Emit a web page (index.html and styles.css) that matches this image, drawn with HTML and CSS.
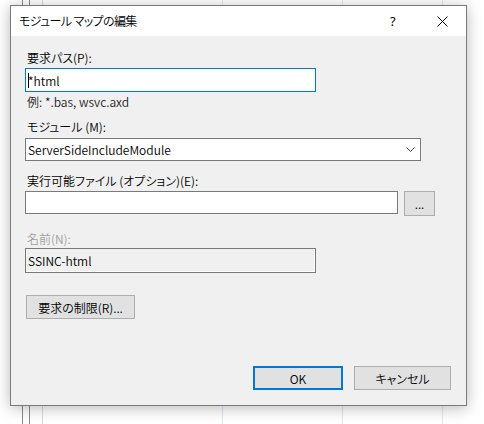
FILE: index.html
```html
<!DOCTYPE html>
<html lang="ja">
<head>
<meta charset="utf-8">
<title>モジュール マップの編集</title>
<link rel="stylesheet" href="styles.css">
</head>
<body>
<div class="dialog">
  <div class="titlebar">
    <span class="title">モジュール マップの編集</span>
    <span class="help">?</span>
    <span class="close"><svg width="11" height="11" viewBox="0 0 11 11"><path d="M0.5 0.5L10.5 10.5M10.5 0.5L0.5 10.5" stroke="#000" stroke-width="1" fill="none"/></svg></span>
  </div>
  <div class="content">
    <div class="label l1">要求パス(P):</div>
    <div class="field f-path"><span class="caret"></span>*html</div>
    <div class="hint">例: *.bas, wsvc.axd</div>
    <div class="label l2">モジュール (M):</div>
    <div class="field f-select">ServerSideIncludeModule<svg class="chev" width="9" height="5" viewBox="0 0 9 5"><path d="M0.5 0.5L4.5 4.5L8.5 0.5" stroke="#444" stroke-width="1" fill="none"/></svg></div>
    <div class="label l3">実行可能ファイル (オプション)(E):</div>
    <div class="row">
      <div class="field f-exe"></div>
      <div class="btn btn-browse">...</div>
    </div>
    <div class="label disabled l4">名前(N):</div>
    <div class="field f-name">SSINC-html</div>
    <div class="btn btn-limit">要求の制限(R)...</div>
    <div class="footer">
      <div class="btn btn-ok">OK</div>
      <div class="btn btn-cancel">キャンセル</div>
    </div>
  </div>
</div>
</body>
</html>
```
FILE: styles.css
```css
html, body {
  margin: 0;
  padding: 0;
}
body {
  width: 484px;
  height: 424px;
  overflow: hidden;
  font-family: "Noto Sans CJK JP", "Noto Sans", sans-serif;
  font-feature-settings: "palt";
  font-size: 12px;
  font-weight: 350;
  color: #000;
  background-color: #fff;
  background-image:
    linear-gradient(#8a8a8a, #8a8a8a),
    linear-gradient(#8a8a8a, #8a8a8a),
    linear-gradient(#d8d8d8, #d8d8d8),
    linear-gradient(#dfe8f2, #dfe8f2),
    linear-gradient(#dfe8f2, #dfe8f2),
    linear-gradient(#dfe8f2, #dfe8f2);
  background-size: 1px 100%;
  background-repeat: no-repeat;
  background-position: 22px 0, 29px 0, 42px 0, 222px 0, 342px 0, 442px 0;
}
.dialog {
  margin: 5px 0 0 10px;
  width: 455px;
  height: 399px;
  border: 1px solid #7a7a7a;
  background: #f0f0f0;
  box-shadow: 0 2px 14px rgba(0, 0, 0, 0.28);
  display: flex;
  flex-direction: column;
}
.titlebar {
  height: 30px;
  background: #fff;
  display: flex;
  align-items: center;
  flex: none;
}
.title {
  margin-left: 8px;
  flex: 1;
  line-height: 16px;
  letter-spacing: -0.6px;
}
.help {
  width: 10px;
  margin-right: 37px;
  font-family: "Noto Sans", sans-serif;
  font-size: 13px;
  font-weight: 400;
}
.close {
  width: 11px;
  height: 11px;
  margin-right: 18px;
  display: flex;
}
.content {
  flex: 1;
  padding: 0 15px 15px 14px;
  display: flex;
  flex-direction: column;
  align-items: flex-start;
}
.label, .hint {
  line-height: 16px;
  padding-left: 2px;
  white-space: nowrap;
}
.l1 { margin-top: 14px; }
.hint { margin-top: 2px; color: #222; }
.l2 { margin-top: 9px; }
.l3 { margin-top: 12px; }
.l4 { margin-top: 15px; }
.disabled { color: #a0a0a0; }
.field {
  box-sizing: border-box;
  border: 1px solid #7a7a7a;
  background: #fff;
  display: flex;
  align-items: center;
  padding-left: 2px;
  white-space: nowrap;
}
.f-path {
  margin-top: 2px;
  width: 291px;
  height: 24px;
  border-color: #0078d7;
}
.caret {
  width: 1px;
  height: 15px;
  background: #000;
  margin-right: -1px;
}
.f-select {
  margin-top: 3px;
  width: 396px;
  height: 23px;
  position: relative;
}
.chev {
  position: absolute;
  right: 5px;
  top: 8px;
}
.row {
  margin-top: 2px;
  display: flex;
  align-items: flex-start;
  gap: 6px;
}
.f-exe {
  width: 373px;
  height: 23px;
}
.f-name {
  margin-top: 1px;
  width: 291px;
  height: 25px;
  background: #f0f0f0;
  box-shadow: inset -1px -1px 0 #fff;
}
.btn {
  box-sizing: border-box;
  height: 24px;
  border: 1px solid #adadad;
  background: #e1e1e1;
  display: flex;
  align-items: center;
  justify-content: center;
  white-space: nowrap;
}
.btn-browse {
  width: 31px;
  height: 25px;
}
.btn-limit {
  margin-top: 22px;
  margin-left: 1px;
  width: 109px;
}
.footer {
  margin-top: auto;
  align-self: stretch;
  display: flex;
  justify-content: flex-end;
  gap: 11px;
}
.btn-ok {
  width: 90px;
  border: 2px solid #0078d7;
}
.btn-cancel {
  width: 97px;
}
```
